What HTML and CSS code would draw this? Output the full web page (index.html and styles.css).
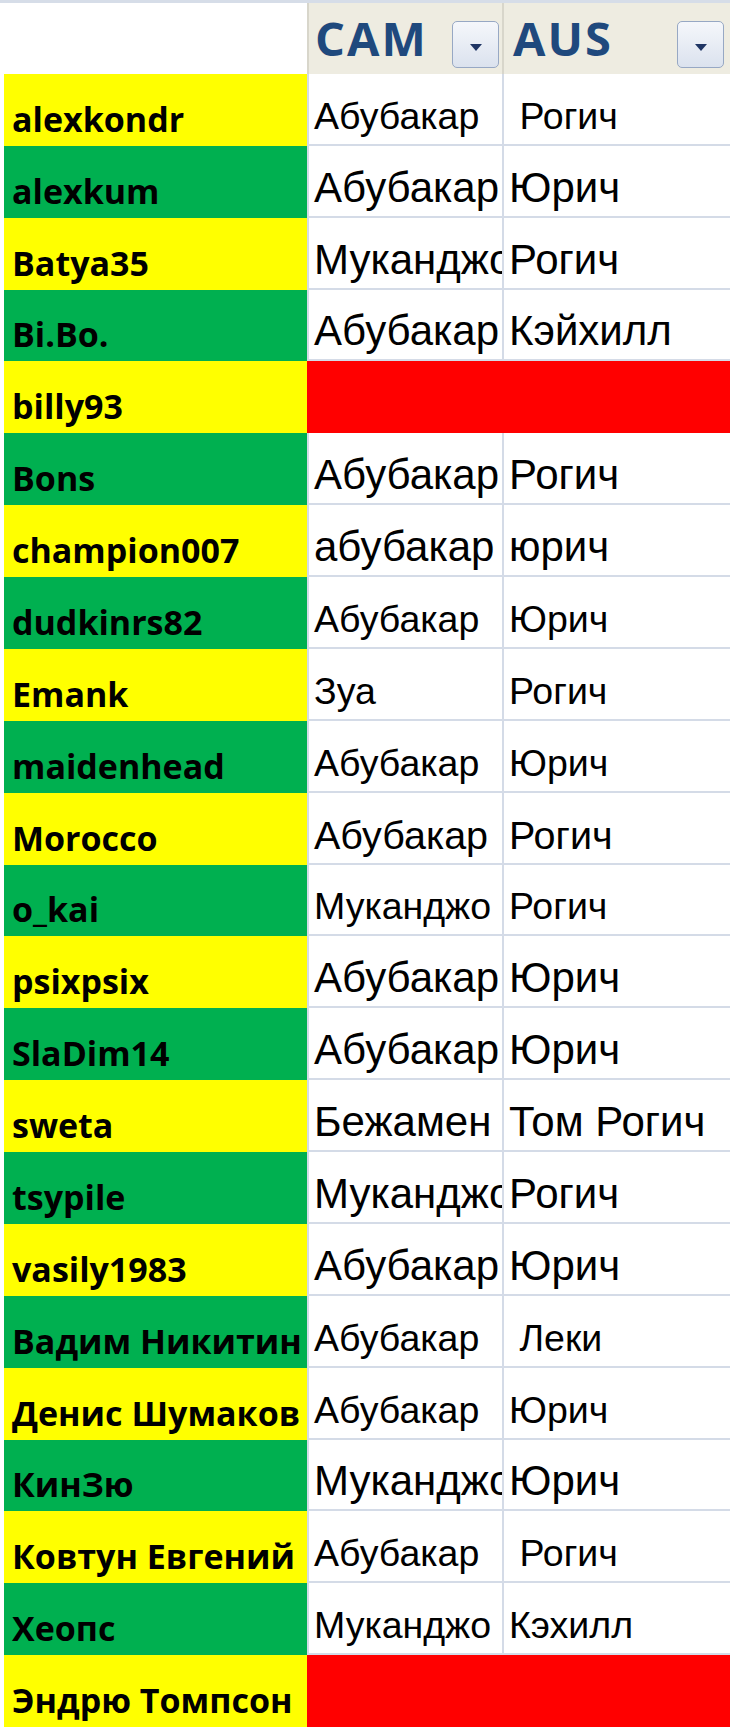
FILE: index.html
```html
<!DOCTYPE html>
<html>
<head>
<meta charset="UTF-8">
<title>CAM / AUS</title>
<link rel="stylesheet" href="styles.css">
</head>
<body>
<div class="sheet">
	<div class="corner"></div>
	<div class="head"><span class="title">CAM</span><span class="drop"></span></div>
	<div class="head last"><span class="title">AUS</span><span class="drop"></span></div>

	<div class="name yellow">alexkondr</div>
	<div class="cell sm">Абубакар</div><div class="cell sm"> Рогич</div>

	<div class="name green">alexkum</div>
	<div class="cell">Абубакар</div><div class="cell">Юрич</div>

	<div class="name yellow">Batya35</div>
	<div class="cell">Муканджо</div><div class="cell">Рогич</div>

	<div class="name green">Bi.Bo.</div>
	<div class="cell">Абубакар</div><div class="cell">Кэйхилл</div>

	<div class="name yellow">billy93</div>
	<div class="miss"></div>

	<div class="name green">Bons</div>
	<div class="cell">Абубакар</div><div class="cell">Рогич</div>

	<div class="name yellow">champion007</div>
	<div class="cell">абубакар</div><div class="cell">юрич</div>

	<div class="name green">dudkinrs82</div>
	<div class="cell sm">Абубакар</div><div class="cell sm">Юрич</div>

	<div class="name yellow">Emank</div>
	<div class="cell sm">Зуа</div><div class="cell sm">Рогич</div>

	<div class="name green">maidenhead</div>
	<div class="cell sm">Абубакар</div><div class="cell sm">Юрич</div>

	<div class="name yellow">Morocco</div>
	<div class="cell md">Абубакар</div><div class="cell md">Рогич</div>

	<div class="name green">o_kai</div>
	<div class="cell sm">Муканджо</div><div class="cell sm">Рогич</div>

	<div class="name yellow">psixpsix</div>
	<div class="cell">Абубакар</div><div class="cell">Юрич</div>

	<div class="name green">SlaDim14</div>
	<div class="cell">Абубакар</div><div class="cell">Юрич</div>

	<div class="name yellow">sweta</div>
	<div class="cell">Бежамен</div><div class="cell">Том Рогич</div>

	<div class="name green">tsypile</div>
	<div class="cell">Муканджо</div><div class="cell">Рогич</div>

	<div class="name yellow">vasily1983</div>
	<div class="cell">Абубакар</div><div class="cell">Юрич</div>

	<div class="name green">Вадим Никитин</div>
	<div class="cell sm">Абубакар</div><div class="cell sm"> Леки</div>

	<div class="name yellow">Денис Шумаков</div>
	<div class="cell sm">Абубакар</div><div class="cell sm">Юрич</div>

	<div class="name green">КинЗю</div>
	<div class="cell">Муканджо</div><div class="cell">Юрич</div>

	<div class="name yellow">Ковтун Евгений</div>
	<div class="cell sm">Абубакар</div><div class="cell sm"> Рогич</div>

	<div class="name green">Хеопс</div>
	<div class="cell sm">Муканджо</div><div class="cell sm">Кэхилл</div>

	<div class="name yellow">Эндрю Томпсон</div>
	<div class="miss"></div>
</div>
</body>
</html>
```

FILE: styles.css
```css
body{
	margin:0;
	padding:0;
	background:#fff;
	font-family:"Liberation Sans", Arial, sans-serif;
	color:#000;
}
.sheet{
	width:730px;
	height:1727px;
	box-sizing:border-box;
	border-top:3px solid #d6dde8;
	padding-left:4px;
	display:grid;
	grid-template-columns:303px 195px 228px;
	grid-template-rows:71px repeat(23, 1fr);
	overflow:hidden;
}
.corner{
	background:#fff;
}
.head{
	background:#eeece1;
	border-left:2px solid #d8d6cb;
	display:flex;
	align-items:flex-start;
	justify-content:space-between;
	padding:12px 3px 0 6px;
	font-family:"Open Sans", sans-serif;
	font-weight:bold;
	font-size:47px;
	line-height:1;
	color:#1f497d;
	letter-spacing:2px;
}
.head.last{
	padding-left:9px;
	padding-right:6px;
}
.drop{
	margin-top:6px;
	width:45px;
	height:45px;
	border:1px solid #97a8c4;
	border-radius:5px;
	background:linear-gradient(#f5f7fb, #dbe2ee);
	display:flex;
	align-items:center;
	justify-content:center;
	flex-shrink:0;
}
.drop:after{
	content:"";
	margin-top:6px;
	border-left:6px solid transparent;
	border-right:6px solid transparent;
	border-top:7px solid #1f3564;
}
.name{
	display:flex;
	align-items:flex-end;
	padding:0 0 10px 8px;
	font-family:"Open Sans", sans-serif;
	font-weight:bold;
	font-size:34px;
	line-height:1;
	white-space:nowrap;
	overflow:hidden;
}
.yellow{
	background:#ffff00;
}
.green{
	background:#00b050;
}
.cell{
	display:flex;
	align-items:flex-end;
	box-sizing:border-box;
	border-left:2px solid #d4dbe7;
	border-bottom:2px solid #d4dbe7;
	padding:0 0 7px 5px;
	font-size:42px;
	line-height:42px;
	white-space:pre;
	overflow:hidden;
}
.cell.md{
	font-size:39.5px;
}
.cell.sm{
	font-size:37.5px;
}
.miss{
	grid-column:span 2;
	background:#ff0000;
}
```
